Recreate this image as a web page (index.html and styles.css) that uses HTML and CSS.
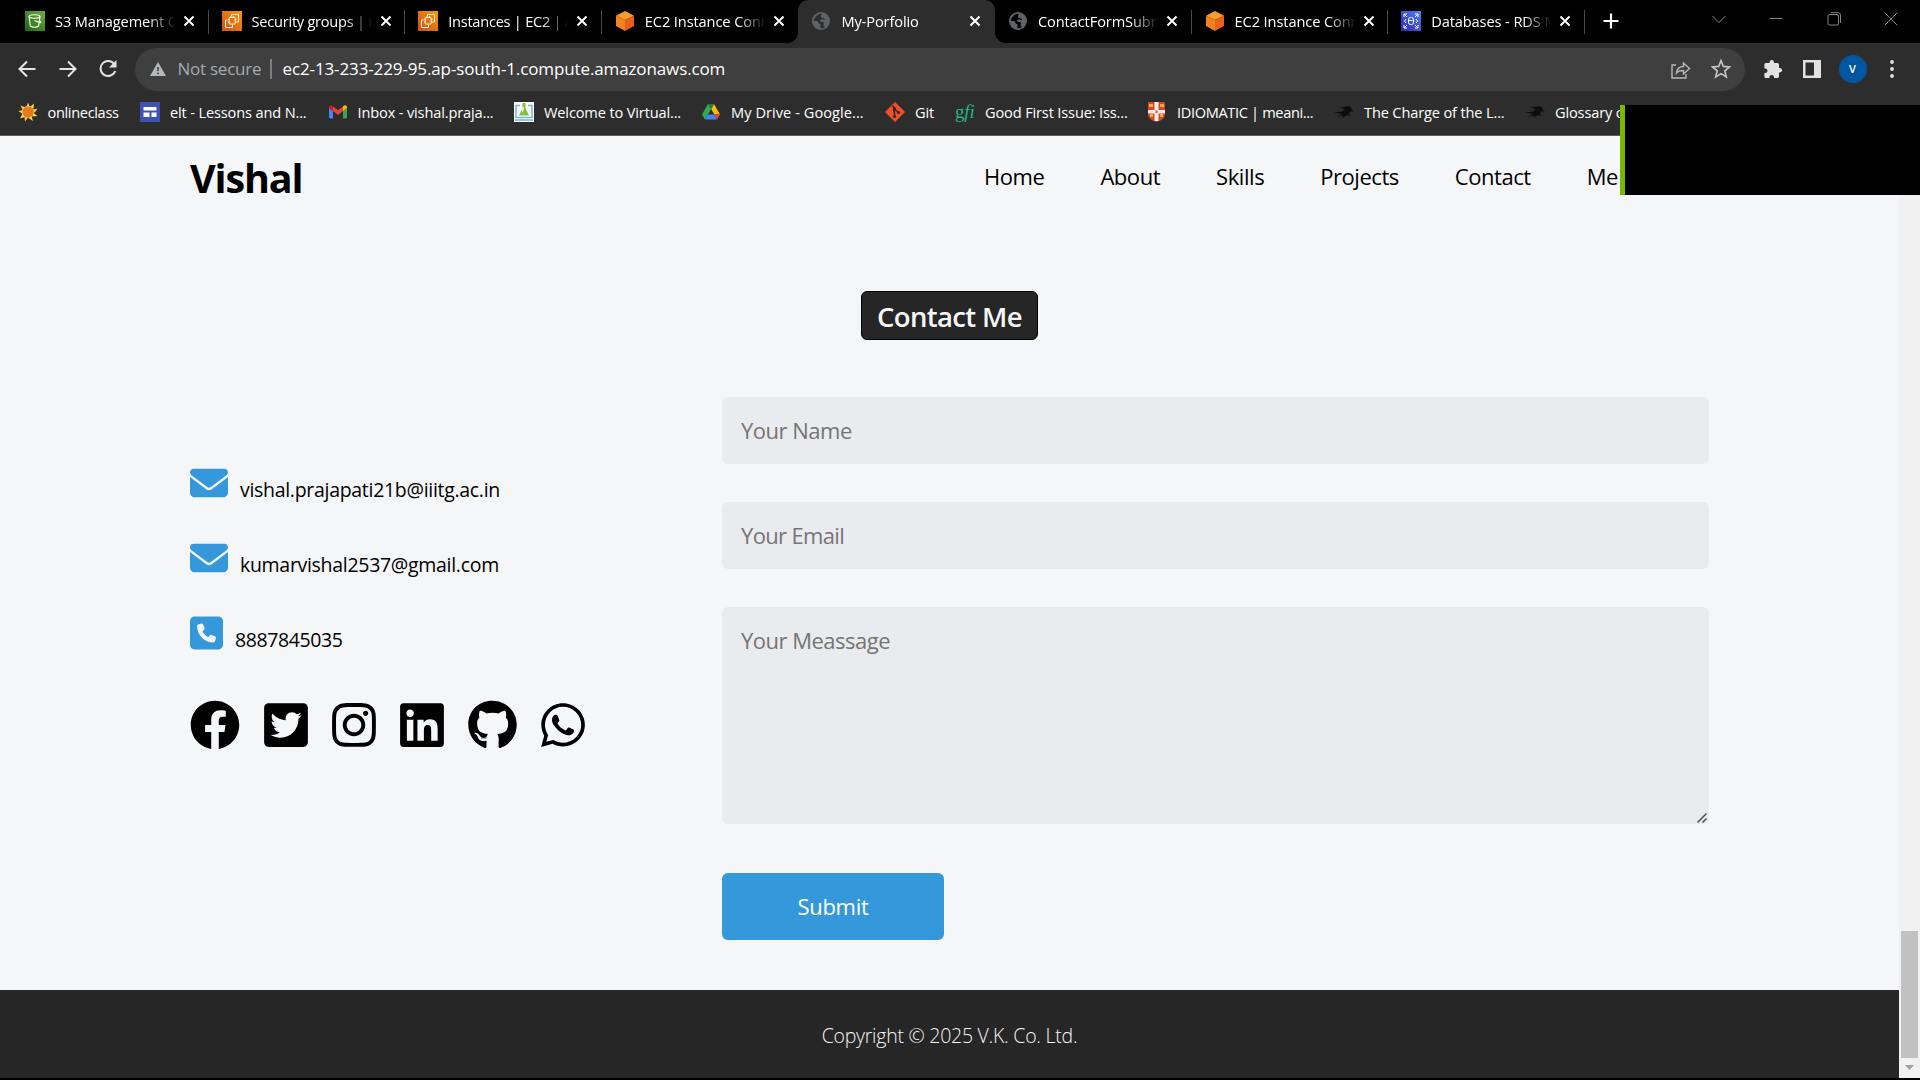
FILE: index.html
```
<!DOCTYPE html>
<html lang="en">
<head>
<meta charset="utf-8">
<title>My-Porfolio</title>
<link rel="stylesheet" href="styles.css">
</head>
<body>
<svg class="defs" width="0" height="0">
  <defs>
    <linearGradient id="orange" x1="0" y1="1" x2="1" y2="0"><stop offset="0" stop-color="#c8511b"/><stop offset="1" stop-color="#f90"/></linearGradient>
    <linearGradient id="green" x1="0" y1="1" x2="1" y2="0"><stop offset="0" stop-color="#1b660f"/><stop offset="1" stop-color="#6cae3e"/></linearGradient>
    <linearGradient id="blue" x1="0" y1="1" x2="1" y2="0"><stop offset="0" stop-color="#2e27ad"/><stop offset="1" stop-color="#527fff"/></linearGradient>
    <symbol id="close" viewBox="0 0 12 12"><path d="M1.5 1.5l9 9m0-9l-9 9" stroke="#fff" stroke-width="2"/></symbol>
    <symbol id="ec2" viewBox="0 0 20 20"><path fill="url(#orange)" d="M0 0h20v20H0z"/><g fill="none" stroke="#fff" stroke-width=".9"><rect x="7.2" y="6.500" width="6" height="6.500" rx=".6"/><path d="M9 6.500V5M11.500 6.500V5M13.200 8.500h1.300M13.200 11h1.300M7.200 8.500H6M7.200 11H6"/><path d="M9.500 5V3.500h7v7.500h-2M5.500 9H3.500v7.500h7v-3"/></g></symbol>
    <symbol id="cube" viewBox="0 0 18 20"><path fill="#f9a02c" d="M9 0l9 4.800L9 9 0 4.800z"/><path fill="#f58220" d="M0 4.800L9 9v11l-9-5z"/><path fill="#e8601c" d="M18 4.800L9 9v11l9-5z"/></symbol>
    <symbol id="world" viewBox="0 0 18 18"><circle cx="9" cy="9" r="9" fill="#5f6368"/><path fill="var(--land)" d="M10 1.800c-4 0-7.500 2.600-8.100 7.200 2 .2 3.300-.2 4.100.6.800.9-.2 1.900 1.500 2.200 1.300.2 1 1.200.9 2.600l-.3 1.700c1.800.4 3.600 0 5.100-1.200-1.700-.4-2-1.400-1.500-2.700.4-1 .4-1.900-.8-2.300-1.400-.3-2.600.1-3-.9-.3-.8.5-1.400 1.600-1.600 1.200-.2 1.900.8 3 .5.900-.3.500-1.300-.5-1.500-1.500-.2-2.700-.4-2.900-1.700C9 3.400 9.600 2.600 10 1.800z"/></symbol>
    <symbol id="raven" viewBox="0 0 20 14"><path fill="#0c0c0c" d="M5.500 2.500L13 1.200l2.500.3 2.500 2-1 .8 3 2-4 .2-1 2.500 2 2-3-.8-2.500.5-3 2.300L9 10.500l-6 1.200 5-2.700L0 7.500l8-1 3-2.200z"/></symbol>
    <symbol id="envelope" viewBox="0 0 512 512"><path d="M48 64C21.500 64 0 85.500 0 112c0 15.100 7.100 29.300 19.200 38.400L236.800 313.600c11.400 8.500 27 8.500 38.400 0L492.800 150.400c12.100-9.100 19.200-23.300 19.200-38.400c0-26.500-21.500-48-48-48H48zM0 176V384c0 35.300 28.700 64 64 64H448c35.300 0 64-28.700 64-64V176L294.400 339.200c-22.800 17.100-54 17.100-76.800 0L0 176z"/></symbol>
  </defs>
</svg>

<header class="browser">
  <div class="tabstrip">
    <div class="tab">
      <svg class="fav" viewBox="0 0 20 20"><path fill="url(#green)" d="M0 0h20v20H0z"/><g fill="none" stroke="#fff" stroke-width="1.100"><ellipse cx="9.500" cy="5.500" rx="5.500" ry="1.700"/><path d="M4 5.500l1.400 9.500c1.500 1.600 6.700 1.600 8.200 0L15 5.500M9.500 9.500l5 2c1.800.6 2-.6.300-1.500"/></g></svg>
      <span class="tab-title">S3 Management C</span><svg class="x"><use href="#close"/></svg>
    </div>
    <div class="tab"><svg class="fav"><use href="#ec2"/></svg><span class="tab-title snug">Security groups | E</span><svg class="x"><use href="#close"/></svg></div>
    <div class="tab"><svg class="fav"><use href="#ec2"/></svg><span class="tab-title snug">Instances | EC2 | a</span><svg class="x"><use href="#close"/></svg></div>
    <div class="tab no-line"><svg class="fav"><use href="#cube"/></svg><span class="tab-title">EC2 Instance Conn</span><svg class="x"><use href="#close"/></svg></div>
    <div class="tab active"><svg class="fav world"><use href="#world"/></svg><span class="tab-title">My-Porfolio</span><svg class="x"><use href="#close"/></svg></div>
    <div class="tab"><svg class="fav world"><use href="#world"/></svg><span class="tab-title">ContactFormSubm</span><svg class="x"><use href="#close"/></svg></div>
    <div class="tab"><svg class="fav"><use href="#cube"/></svg><span class="tab-title">EC2 Instance Conn</span><svg class="x"><use href="#close"/></svg></div>
    <div class="tab">
      <svg class="fav" viewBox="0 0 20 20"><path fill="url(#blue)" d="M0 0h20v20H0z"/><g fill="none" stroke="#fff" stroke-width="1"><path d="M3 6V3h3M14 3h3v3M17 14v3h-3M6 17H3v-3M3 3l3 3M17 3l-3 3M17 17l-3-3M3 17l3-3"/><rect x="7.500" y="6.500" width="5" height="7" rx="2"/><path d="M7.500 9c1 .8 4 .8 5 0M5 8l-1.500 2L5 12M15 8l1.500 2-1.500 2"/></g></svg>
      <span class="tab-title">Databases - RDS M</span><svg class="x"><use href="#close"/></svg>
    </div>
    <svg class="plus" viewBox="0 0 16 16"><path d="M8 .500v15M.500 8h15" stroke="#fff" stroke-width="2.200"/></svg>
    <div class="window-buttons">
      <svg viewBox="0 0 14 14"><path d="M.500 4L7 10.500 13.500 4"/></svg>
      <svg viewBox="0 0 14 14"><path d="M.500 6.500h13"/></svg>
      <svg viewBox="0 0 14 14"><rect x="1" y="2.500" width="10.500" height="10.500" rx="1.500"/><path d="M3.500.700h7.500a2.500 2.500 0 0 1 2.500 2.500V11"/></svg>
      <svg viewBox="0 0 14 14"><path d="M.700.700l12.600 12.600m0-12.600L.700 13.300"/></svg>
    </div>
  </div>

  <div class="toolbar">
    <svg class="nav-icon" viewBox="0 0 18 18"><path d="M17.500 9H2M9 1.500L1.500 9 9 16.500"/></svg>
    <svg class="nav-icon" viewBox="0 0 18 18"><path d="M.500 9H16M9 1.500L16.500 9 9 16.500"/></svg>
    <svg class="nav-icon" viewBox="0 0 18 18"><path d="M15.500 4.500A7.500 7.500 0 1 0 16.200 11"/><path class="solid" d="M17.500 0v7.500H10z"/></svg>
    <div class="address">
      <svg class="warn" viewBox="0 0 16 14"><path fill="#b4b8bc" d="M8 0l8 14H0z"/><path d="M8 5v4M8 10.500v1.700" stroke="#3f3f3f" stroke-width="1.600"/></svg>
      <span class="insecure">Not secure</span>
      <span class="url">ec2-13-233-229-95.ap-south-1.compute.amazonaws.com</span>
      <svg class="share" viewBox="0 0 20 19"><path d="M5 5H1v13h14v-4M5.500 13c.500-4.500 3-6.500 7-6.500V3l6 5.500-6 5.500v-3.500c-3.500 0-5.500.500-7 2.500z"/></svg>
      <svg class="star" viewBox="0 0 18 18"><path d="M9 1.500l2.100 5.200 5.600.4-4.300 3.600 1.400 5.500L9 13.200l-4.800 3 1.400-5.500L1.300 7.100l5.600-.4z"/></svg>
    </div>
    <svg class="puzzle" viewBox="0 0 18 18"><path d="M7.800 0a2.200 2.200 0 0 1 2.200 2.200V3h3.500A1.500 1.500 0 0 1 15 4.500V8h.8a2.200 2.200 0 1 1 0 4.500H15v4A1.500 1.500 0 0 1 13.500 18H10v-.8a2.300 2.300 0 0 0-4.600 0v.8H1.900A1.500 1.500 0 0 1 .4 16.500V13h.8a2.300 2.300 0 0 0 0-4.600H.4V4.500A1.500 1.500 0 0 1 1.900 3h3.700v-.8A2.200 2.200 0 0 1 7.800 0z"/></svg>
    <svg class="panel" viewBox="0 0 18 18"><path fill="#e2e2e2" fill-rule="evenodd" d="M0 0h18v18H0zM2.500 2.500v13h8.500v-13z"/></svg>
    <span class="avatar">V</span>
    <svg class="dots" viewBox="0 0 4 18"><circle cx="2" cy="2" r="1.900"/><circle cx="2" cy="9" r="1.900"/><circle cx="2" cy="16" r="1.900"/></svg>
  </div>

  <div class="bookmarks">
    <a class="bm tight"><svg viewBox="0 0 20 20"><path fill="#fbd24b" d="M8.500 5L10 .500 11.800 5zM12 5l4-3.500-.5 5zM15 7.500l4.500-.8-3 4zM15.500 11l4 3-5 .5zM13.500 14l1.500 5-4.500-3zM10 15.500L7 19.500 6.500 15zM7 15l-5 1.500 2.500-5zM4.500 12L.500 9l4.500-1zM5 8.500L2.500 3.500l5 2z"/><circle cx="10" cy="10" r="5.800" fill="#e87a1b" stroke="#fbd24b" stroke-width=".6"/></svg><span>onlineclass</span></a>
    <a class="bm"><svg viewBox="0 0 20 20"><path fill="#3f51b5" d="M0 0h20v20H0z"/><path fill="#fff" d="M3.500 5h13v3.500h-13zM3.500 10.500h6V15h-6zM11.500 10.500h5V15h-5z"/></svg><span>elt - Lessons and N...</span></a>
    <a class="bm"><svg viewBox="0 0 20 20"><path fill="#4285f4" d="M1 6l4 3v7.500H2.200A1.200 1.200 0 0 1 1 15.300z"/><path fill="#34a853" d="M19 6l-4 3v7.500h2.800a1.200 1.200 0 0 0 1.200-1.200z"/><path fill="#ea4335" d="M5 4.500l5 3.800 5-3.800V9l-5 4-5-4z"/><path fill="#c5221f" d="M1 5.200C1 3.300 3 2.700 4.300 3.800L5 4.500V9L1 6z"/><path fill="#fbbc04" d="M19 5.200c0-1.900-2-2.500-3.300-1.400l-.7.700V9l4-3z"/></svg><span>Inbox - vishal.praja...</span></a>
    <a class="bm"><svg viewBox="0 0 20 20"><path fill="#fff" d="M0 0h20v20H0z"/><path fill="none" stroke="#6fb5dd" stroke-width="1.500" d="M6 3.500H2v12h16v-12h-4M1 18h18"/><path fill="#86bf3c" d="M8.500 1h3v5l3.500 7.500H5L8.500 6z"/><path fill="#fff" d="M8.500 5h1.200v3L8 11z"/></svg><span>Welcome to Virtual...</span></a>
    <a class="bm wide"><svg viewBox="0 0 20 20"><path fill="#34a853" d="M7 2L1 12.500 4 17.500 10.300 7z"/><path fill="#188038" d="M7 2h6l-2.700 5z"/><path fill="#fbbc04" d="M13 2l6 10.500h-5.700L10.300 7z"/><path fill="#4285f4" d="M6.700 12.500h6.600l2.700 5H4z"/><path fill="#ea4335" d="M13.300 12.500H19l-3 5z"/></svg><span>My Drive - Google...</span></a>
    <a class="bm"><svg viewBox="0 0 20 20"><path fill="#f34f29" d="M10 0l10 10-10 10L0 10z"/><g stroke="#2d2d2d" stroke-width="1.400"><path d="M7.500 3.500l2 2.500v8.500M9.500 7l4 3.500"/></g><g fill="#2d2d2d"><circle cx="9.500" cy="6.500" r="1.600"/><circle cx="9.500" cy="14.500" r="1.600"/><circle cx="13.500" cy="10.500" r="1.600"/></g></svg><span>Git</span></a>
    <a class="bm"><b class="gfi">g<i>fi</i></b><span>Good First Issue: Iss...</span></a>
    <a class="bm tight"><svg viewBox="0 0 20 20"><path fill="#d7462b" d="M1 0h17v14c-2 4-6 5-8.500 6C7 19 3 18 1 14z"/><path fill="#f1b13c" d="M2 2h4v3H2zM13 2h4v3h-4zM3 12h3v3H3zM13 12h3v3h-3z"/><path fill="#eee" d="M7.500 0h4v8H18v3.500h-6.500V19h-4v-7.500H1V8h6.500z"/><path fill="#d7462b" d="M8.500 8.500h2V11h-2z"/></svg><span>IDIOMATIC | meani...</span></a>
    <a class="bm"><svg><use href="#raven"/></svg><span>The Charge of the L...</span></a>
    <a class="bm"><svg><use href="#raven"/></svg><span>Glossary o</span></a>
  </div>
</header>

<div class="viewport">
  <div class="page">
    <div class="site-header">
      <h1 class="brand">Vishal</h1>
      <nav class="menu"><a>Home</a><a>About</a><a>Skills</a><a>Projects</a><a>Contact</a><a>Me</a></nav>
    </div>

    <main class="contact">
      <h2 class="heading">Contact Me</h2>
      <div class="columns">
        <div class="info">
          <p class="line"><svg width="38" height="38"><use href="#envelope"/></svg><span class="mail">vishal.prajapati21b@iiitg.ac.in</span></p>
          <p class="line"><svg width="38" height="38"><use href="#envelope"/></svg><span class="mail">kumarvishal2537@gmail.com</span></p>
          <p class="line"><svg width="33" height="38" viewBox="0 0 448 512"><path d="M64 32C28.700 32 0 60.700 0 96V416c0 35.300 28.700 64 64 64H384c35.300 0 64-28.700 64-64V96c0-35.300-28.700-64-64-64H64zm90.700 96.700c9.700-2.600 19.900 2.300 23.700 11.600l20 48c3.400 8.200 1 17.600-5.800 23.200L168 231.700c16.600 35.200 45.100 63.700 80.300 80.300l20.200-24.700c5.600-6.800 15-9.200 23.200-5.800l48 20c9.300 3.900 14.200 14 11.600 23.700l-12 44C336.900 378 329 384 320 384C196.300 384 96 283.700 96 160c0-9 6-16.900 14.700-19.300l44-12z"/></svg><span class="phone">8887845035</span></p>
          <div class="social">
            <svg width="50" height="50" viewBox="0 0 512 512"><path d="M504 256C504 119 393 8 256 8S8 119 8 256c0 123.780 90.690 226.380 209.250 245V327.690h-63V256h63v-54.640c0-62.150 37-96.480 93.670-96.480 27.140 0 55.520 4.840 55.520 4.840v61h-31.280c-30.800 0-40.410 19.120-40.410 38.730V256h68.780l-11 71.690h-57.780V501C413.310 482.380 504 379.780 504 256z"/></svg>
            <svg width="44" height="50" viewBox="0 0 448 512"><path d="M400 32H48C21.500 32 0 53.500 0 80v352c0 26.500 21.500 48 48 48h352c26.500 0 48-21.500 48-48V80c0-26.500-21.500-48-48-48zm-48.900 158.800c.2 2.800.2 5.700.2 8.500 0 86.700-66 186.600-186.600 186.600-37.200 0-71.700-10.800-100.700-29.400 5.300.6 10.400.8 15.800.8 30.700 0 58.900-10.400 81.400-28-28.800-.6-53-19.500-61.300-45.500 10.100 1.500 19.200 1.500 29.600-1.200-30-6.100-52.500-32.500-52.500-64.400v-.8c8.700 4.900 18.900 7.900 29.600 8.300a65.447 65.447 0 0 1-29.200-54.600c0-12.200 3.200-23.400 8.900-33.100 32.300 39.800 80.800 65.800 135.200 68.600-9.300-44.500 24-80.600 64-80.600 18.900 0 35.900 7.900 47.900 20.700 14.800-2.800 29-8.300 41.600-15.800-4.900 15.200-15.200 28-28.800 36.100 13.200-1.400 26-5.100 37.800-10.200-8.900 13.100-20.100 24.700-32.900 34z"/></svg>
            <svg width="44" height="50" viewBox="0 0 448 512"><path d="M224.100 141c-63.600 0-114.900 51.300-114.900 114.900s51.300 114.900 114.900 114.900S339 319.500 339 255.900 287.700 141 224.100 141zm0 189.600c-41.100 0-74.700-33.500-74.700-74.700s33.500-74.700 74.700-74.700 74.700 33.500 74.700 74.700-33.600 74.700-74.700 74.700zm146.400-194.300c0 14.900-12 26.800-26.800 26.800-14.900 0-26.800-12-26.800-26.800s12-26.800 26.800-26.800 26.800 12 26.800 26.800zm76.100 27.200c-1.700-35.900-9.900-67.700-36.200-93.900-26.200-26.200-58-34.400-93.900-36.200-37-2.100-147.900-2.100-184.900 0-35.800 1.700-67.600 9.900-93.900 36.100s-34.400 58-36.200 93.900c-2.100 37-2.100 147.900 0 184.900 1.700 35.900 9.900 67.700 36.200 93.900s58 34.400 93.900 36.200c37 2.100 147.900 2.100 184.900 0 35.900-1.700 67.700-9.900 93.900-36.200 26.200-26.200 34.400-58 36.200-93.900 2.100-37 2.100-147.800 0-184.800zM398.800 388c-7.800 19.600-22.900 34.700-42.600 42.600-29.500 11.700-99.500 9-132.100 9s-102.700 2.600-132.100-9c-19.600-7.800-34.700-22.900-42.600-42.600-11.700-29.500-9-99.500-9-132.100s-2.600-102.700 9-132.100c7.800-19.600 22.900-34.700 42.600-42.600 29.500-11.700 99.500-9 132.100-9s102.700-2.600 132.100 9c19.600 7.800 34.700 22.900 42.600 42.600 11.700 29.500 9 99.500 9 132.100s2.700 102.700-9 132.100z"/></svg>
            <svg width="44" height="50" viewBox="0 0 448 512"><path d="M416 32H31.900C14.300 32 0 46.500 0 64.300v383.400C0 465.500 14.300 480 31.900 480H416c17.600 0 32-14.500 32-32.300V64.300c0-17.800-14.400-32.300-32-32.300zM135.400 416H69V202.200h66.500V416zm-33.200-243c-21.300 0-38.500-17.300-38.500-38.500S80.900 96 102.200 96c21.200 0 38.500 17.300 38.500 38.500 0 21.300-17.200 38.500-38.500 38.500zm282.100 243h-66.400V312c0-24.800-.5-56.700-34.500-56.700-34.600 0-39.900 27-39.900 54.900V416h-66.400V202.200h63.700v29.200h.9c8.900-16.800 30.600-34.500 62.900-34.500 67.200 0 79.700 44.300 79.700 101.900V416z"/></svg>
            <svg width="49" height="50" viewBox="0 0 496 512"><path d="M165.900 397.400c0 2-2.300 3.600-5.200 3.600-3.300.3-5.600-1.300-5.600-3.600 0-2 2.300-3.600 5.200-3.600 3-.3 5.600 1.300 5.600 3.600zm-31.100-4.500c-.7 2 1.300 4.300 4.300 4.900 2.600 1 5.600 0 6.200-2s-1.300-4.300-4.300-5.200c-2.600-.7-5.500.3-6.200 2.300zm44.200-1.700c-2.900.7-4.900 2.600-4.600 4.900.3 2 2.900 3.300 5.900 2.600 2.900-.7 4.900-2.600 4.600-4.600-.3-1.900-3-3.200-5.900-2.900zM244.800 8C106.100 8 0 113.300 0 252c0 110.900 69.800 205.800 169.500 239.200 12.800 2.300 17.300-5.600 17.300-12.100 0-6.200-.3-40.400-.3-61.400 0 0-70 15-84.700-29.800 0 0-11.400-29.100-27.800-36.600 0 0-22.900-15.700 1.600-15.400 0 0 24.900 2 38.600 25.800 21.900 38.600 58.600 27.500 72.900 20.900 2.300-16 8.800-27.100 16-33.700-55.900-6.200-112.300-14.300-112.300-110.500 0-27.500 7.600-41.300 23.600-58.900-2.600-6.500-11.100-33.300 2.600-67.900 20.900-6.500 69 27 69 27 20-5.600 41.500-8.500 62.800-8.500s42.800 2.900 62.800 8.500c0 0 48.100-33.600 69-27 13.700 34.700 5.200 61.400 2.600 67.900 16 17.700 25.800 31.500 25.800 58.900 0 96.500-58.900 104.200-114.800 110.500 9.200 7.900 17 22.900 17 46.400 0 33.700-.3 75.400-.3 83.600 0 6.500 4.600 14.400 17.300 12.100C428.200 457.800 496 362.900 496 252 496 113.300 383.500 8 244.800 8z"/></svg>
            <svg width="44" height="50" viewBox="0 0 448 512"><path d="M380.900 97.100C339 55.100 283.200 32 223.900 32c-122.400 0-222 99.600-222 222 0 39.100 10.200 77.300 29.600 111L0 480l117.700-30.900c32.400 17.700 68.900 27 106.100 27h.1c122.300 0 224.100-99.600 224.100-222 0-59.300-25.200-115-67.100-157zm-157 341.600c-33.200 0-65.700-8.900-94-25.700l-6.700-4-69.800 18.300L72 359.200l-4.400-7c-18.500-29.400-28.200-63.300-28.200-98.200 0-101.700 82.800-184.500 184.600-184.500 49.300 0 95.600 19.200 130.400 54.100 34.800 34.900 56.200 81.200 56.100 130.500 0 101.800-84.900 184.600-186.600 184.600zm101.200-138.200c-5.500-2.800-32.800-16.200-37.900-18-5.100-1.900-8.800-2.800-12.500 2.800-3.700 5.600-14.300 18-17.600 21.800-3.200 3.700-6.500 4.200-12 1.400-32.600-16.300-54-29.100-75.500-66-5.700-9.800 5.700-9.100 16.300-30.300 1.800-3.700.9-6.900-.5-9.700-1.400-2.800-12.500-30.100-17.100-41.200-4.500-10.800-9.100-9.300-12.500-9.500-3.200-.2-6.900-.2-10.600-.2-3.700 0-9.700 1.400-14.800 6.900-5.100 5.600-19.400 19-19.400 46.300 0 27.300 19.900 53.700 22.600 57.400 2.800 3.700 39.100 59.700 94.800 83.800 35.200 15.200 49 16.500 66.600 13.900 10.700-1.600 32.800-13.400 37.400-26.400 4.600-13 4.600-24.100 3.200-26.400-1.300-2.500-5-3.900-10.500-6.600z"/></svg>
          </div>
        </div>
        <form class="form">
          <input class="field" type="text" placeholder="Your Name">
          <input class="field email" type="email" placeholder="Your Email">
          <div class="message-box">
            <textarea class="field message" placeholder="Your Meassage"></textarea>
            <svg class="grip" width="10" height="10" viewBox="0 0 10 10"><path d="M.500 9.500l9-9M5.500 9.500l4-4" stroke="#4c4c4c" stroke-width="1.500"/></svg>
          </div>
          <button class="submit" type="button">Submit</button>
        </form>
      </div>
    </main>

    <footer class="footer">Copyright © 2025 V.K. Co. Ltd.</footer>
  </div>
  <div class="scrollbar"><div class="thumb"></div><svg viewBox="0 0 9 5" width="9" height="5"><path fill="#a3a3a3" d="M0 0h9L4.500 5z"/></svg></div>
</div>
<div class="overlay"></div>
</body>
</html>
```
FILE: styles.css
```
* { box-sizing: border-box; margin: 0; padding: 0; }
body {
  width: 1920px; height: 1080px; overflow: hidden; position: relative;
  display: flex; flex-direction: column;
  background: #000; font-family: "Open Sans", "Noto Sans", sans-serif;
}
svg { display: block; flex: none; }
.defs { position: absolute; }

/* browser chrome */
.browser { height: 136px; flex: none; background: #2d2d2d; border-bottom: 1px solid #5c5c5c; color: #fff; }
.tabstrip { height: 43px; display: flex; align-items: center; padding-left: 12px; background: #000; }
.tab { width: 196.6px; height: 43px; flex: none; display: flex; align-items: center; padding: 0 0 2px 13px; position: relative; --land: #000; }
.tab::after { content: ""; position: absolute; right: 0; top: 10px; width: 1px; height: 24px; background: #4a4a4a; }
.tab.no-line::after { display: none; }
.fav { width: 20px; height: 20px; }
.fav.world { width: 18px; height: 18px; margin: 0 1px; }
.tab-title {
  width: 119px; margin-left: 10px; overflow: hidden; white-space: nowrap;
  font-size: 14.6px; line-height: 24px; letter-spacing: -0.1px;
  -webkit-mask-image: linear-gradient(90deg, #000 92px, transparent 121px);
  mask-image: linear-gradient(90deg, #000 92px, transparent 121px);
}
.tab-title.snug { letter-spacing: -0.25px; }
.x { width: 12px; height: 12px; margin-left: 9px; }
.tab.active { background: #2d2d2d; border-radius: 10px 10px 0 0; --land: #2d2d2d; }
.tab.active::before, .tab.active::after { content: ""; display: block; position: absolute; top: auto; bottom: 0; width: 10px; height: 10px; }
.tab.active::before { left: -10px; background: radial-gradient(circle at 0 0, transparent 9.5px, #2d2d2d 10px); }
.tab.active::after { right: -10px; background: radial-gradient(circle at 100% 0, transparent 9.5px, #2d2d2d 10px); }
.plus { width: 16px; height: 16px; margin: 0 0 2px 18px; }
.window-buttons { margin: 0 22px 5px auto; display: flex; gap: 43.300px; }
.window-buttons svg { width: 14px; height: 14px; fill: none; stroke: #858585; stroke-width: 1; }

.toolbar { height: 52px; display: flex; align-items: center; padding: 0 0 0 18px; }
.nav-icon { width: 18px; height: 18px; margin-right: 22.500px; fill: none; stroke: #e4e4e4; stroke-width: 2; }
.nav-icon .solid { fill: #e4e4e4; stroke: none; }
.address { width: 1610px; height: 43px; margin-left: -5px; padding: 0 14px 0 15px; display: flex; align-items: center; background: #3f3f3f; border-radius: 22px; }
.warn { width: 16px; height: 14px; }
.insecure { width: 94px; margin-left: 12px; border-right: 2px solid #7d7d7d; color: #a5a9ad; font-size: 17px; line-height: 20px; letter-spacing: -0.25px; }
.url { margin: 0 auto 0 11px; font-size: 17px; line-height: 24px; letter-spacing: -0.12px; }
.share { width: 20px; height: 19px; margin-right: 20px; fill: none; stroke: #b9b9b9; stroke-width: 1.400; }
.star { width: 20px; height: 20px; fill: none; stroke: #c4c4c4; stroke-width: 1.500; }
.puzzle { width: 18px; height: 18px; margin-left: 19px; fill: #e2e2e2; }
.panel { width: 18px; height: 18px; margin-left: 21px; }
.avatar { width: 28px; height: 28px; margin-left: 18px; border-radius: 50%; background: #0057a0; text-align: center; font-size: 11px; font-weight: 600; line-height: 28px; }
.dots { width: 4px; height: 18px; margin-left: 23px; fill: #e2e2e2; }

.bookmarks { height: 34px; display: grid; grid-template-columns: 122.500px 187.500px 186.500px 187px 184px 70px 192px 187px 191px 120px; align-items: center; padding-left: 17.500px; }
.bm { display: flex; align-items: center; gap: 10px; font-size: 14.600px; line-height: 24px; letter-spacing: -0.15px; white-space: nowrap; }
.bm.tight { letter-spacing: -0.35px; }
.bm.wide { letter-spacing: 0.05px; }
.bm svg { width: 20px; height: 20px; }
.gfi { width: 20px; color: #22b58a; font: 19px/20px "Liberation Serif", serif; }

/* page */
.viewport { height: 942px; flex: none; display: flex; }
.page { width: 1899px; background: #f5f6f8; display: flex; flex-direction: column; }
.site-header { height: 88px; display: flex; align-items: center; padding: 0 0 4px 190px; }
.brand { width: 794px; font-size: 39.500px; line-height: 50px; font-weight: 700; letter-spacing: -1.15px; }
.menu { display: flex; gap: 56px; padding-bottom: 5px; font-size: 22px; line-height: 30px; letter-spacing: -0.45px; }
.contact { padding: 67px 190px 0; height: 766px; }
.heading { width: 177px; height: 49px; margin: 0 auto; border: 1px solid #000; border-radius: 6px; background: #262626; color: #f5f6f8; text-align: center; font-size: 27.500px; font-weight: 600; line-height: 50px; letter-spacing: -0.65px; }
.columns { display: grid; grid-template-columns: 532px 987px; margin-top: 57px; }
.info { padding-top: 67px; }
.line { height: 38px; margin-bottom: 37px; display: flex; align-items: flex-end; gap: 12px; font-size: 19.500px; font-weight: 370; line-height: 28px; }
.line svg { fill: #3498db; }
.line span { margin-bottom: -2px; }
.mail { letter-spacing: -0.3px; }
.phone { letter-spacing: -0.4px; }
.social { display: flex; gap: 24px; margin-top: 48px; }
.form { display: flex; flex-direction: column; align-items: flex-start; }
.field { display: block; width: 987px; height: 67px; margin-bottom: 38px; padding: 0 19px 2px; border: 0; border-radius: 6px; background: #eaebef; font: 22px/30px "Open Sans", "Noto Sans", sans-serif; letter-spacing: -0.5px; }
.field::placeholder { color: #757575; }
.field.email { letter-spacing: -0.65px; }
.message-box { position: relative; margin-bottom: 49px; }
.field.message { height: 217px; margin: 0; padding-top: 18px; resize: none; }
.grip { position: absolute; right: 2px; bottom: 1px; }
.submit { width: 222px; height: 67px; padding-bottom: 2px; border: 0; border-radius: 6px; background: #3498db; color: #fff; font: 22px/30px "Open Sans", "Noto Sans", sans-serif; letter-spacing: -0.3px; }
.footer { height: 88px; background: #262626; color: #f5f6f8; text-align: center; font-size: 19.500px; font-weight: 300; line-height: 92px; letter-spacing: -0.25px; }
.scrollbar { width: 21px; background: #f1f1f1; display: flex; flex-direction: column; align-items: center; justify-content: flex-end; padding-bottom: 8px; }
.thumb { width: 17px; height: 127px; margin-bottom: 7px; background: #c1c1c1; }
.overlay { position: absolute; left: 1620px; top: 105px; width: 300px; height: 90px; border-left: 5px solid #76b900; background: #000; }
```
